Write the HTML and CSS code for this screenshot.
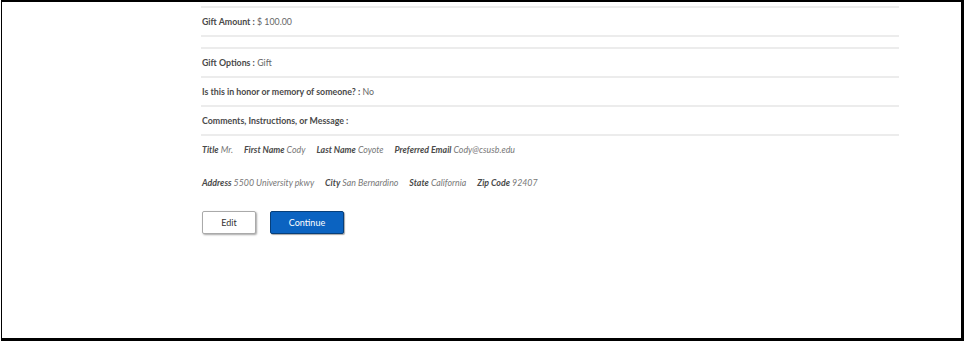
FILE: index.html
```html
<!DOCTYPE html>
<html lang="en">
<head>
    <meta charset="UTF-8">
    <meta name="viewport" content="width=device-width, initial-scale=1.0">
    <title>Review Your Gift</title>
    <link rel="stylesheet" href="styles.css">
</head>
<body>
    <div class="frame">
        <div class="review">
            <!-- Gift amount -->
            <div class="row first">
                <span class="label">Gift Amount :</span>&nbsp;<span class="value">$ 100.00</span>
            </div>

            <!-- Gift details -->
            <div class="group">
                <div class="row first">
                    <span class="label">Gift Options :</span>&nbsp;<span class="value">Gift</span>
                </div>
                <div class="row">
                    <span class="label">Is this in honor or memory of someone? :</span>&nbsp;<span class="value">No</span>
                </div>
                <div class="row">
                    <span class="label">Comments, Instructions, or Message :</span>
                </div>
            </div>

            <!-- Donor info -->
            <div class="info">
                <div class="info-line">
                    <span class="field"><b>Title</b> Mr.</span>
                    <span class="field"><b>First Name</b> Cody</span>
                    <span class="field"><b>Last Name</b> Coyote</span>
                    <span class="field"><b>Preferred Email</b> Cody@csusb.edu</span>
                </div>
                <div class="info-line">
                    <span class="field"><b>Address</b> 5500 University pkwy</span>
                    <span class="field"><b>City</b> San Bernardino</span>
                    <span class="field"><b>State</b> California</span>
                    <span class="field"><b>Zip Code</b> 92407</span>
                </div>
            </div>

            <div class="actions">
                <button class="btn btn-edit">Edit</button>
                <button class="btn btn-continue">Continue</button>
            </div>
        </div>
    </div>
</body>
</html>
```

FILE: styles.css
```css
html, body {
    margin: 0;
    padding: 0;
    background: #fff;
}
body {
    font-family: Lato, "Open Sans", Arial, sans-serif;
    font-size: 8.8px;
    color: #555;
}
.frame {
    box-sizing: border-box;
    height: 341px;
    margin-left: 1px;
    border-top: 2px solid #000;
    border-left: 1px solid #000;
    border-right: 3px solid #000;
    border-bottom: 3px solid #000;
    background: #fff;
}
.review {
    width: 698px;
    margin-left: 199px;
    padding-top: 4px;
}
.row {
    height: 27px;
    display: flex;
    align-items: center;
    padding-left: 1px;
    border-bottom: 2px solid #ececec;
}
.row.first {
    border-top: 2px solid #ececec;
}
.group {
    margin-top: 10px;
}
.label {
    font-weight: bold;
    color: #4a4a4a;
}
.value {
    color: #666;
}
.info {
    padding-top: 7px;
    padding-left: 1px;
}
.info-line {
    display: flex;
    gap: 11px;
    line-height: 14px;
    margin-bottom: 19px;
    font-style: italic;
    color: #777;
}
.info-line b {
    color: #4a4a4a;
}
.actions {
    display: flex;
    gap: 14px;
    margin-top: 21px;
    padding-left: 1px;
}
.btn {
    height: 23px;
    font-family: Lato, "Open Sans", Arial, sans-serif;
    font-size: 9px;
    border-radius: 2px;
    cursor: pointer;
}
.btn-edit {
    width: 54px;
    background: #fff;
    color: #333;
    border: 1px solid #aaa;
    box-shadow: 1px 1px 2px rgba(0, 0, 0, 0.35);
}
.btn-continue {
    width: 74px;
    background: #0b63c1;
    color: #fff;
    border: 1px solid #073f7a;
    box-shadow: 1px 1px 1px rgba(0, 0, 0, 0.35);
}
```
